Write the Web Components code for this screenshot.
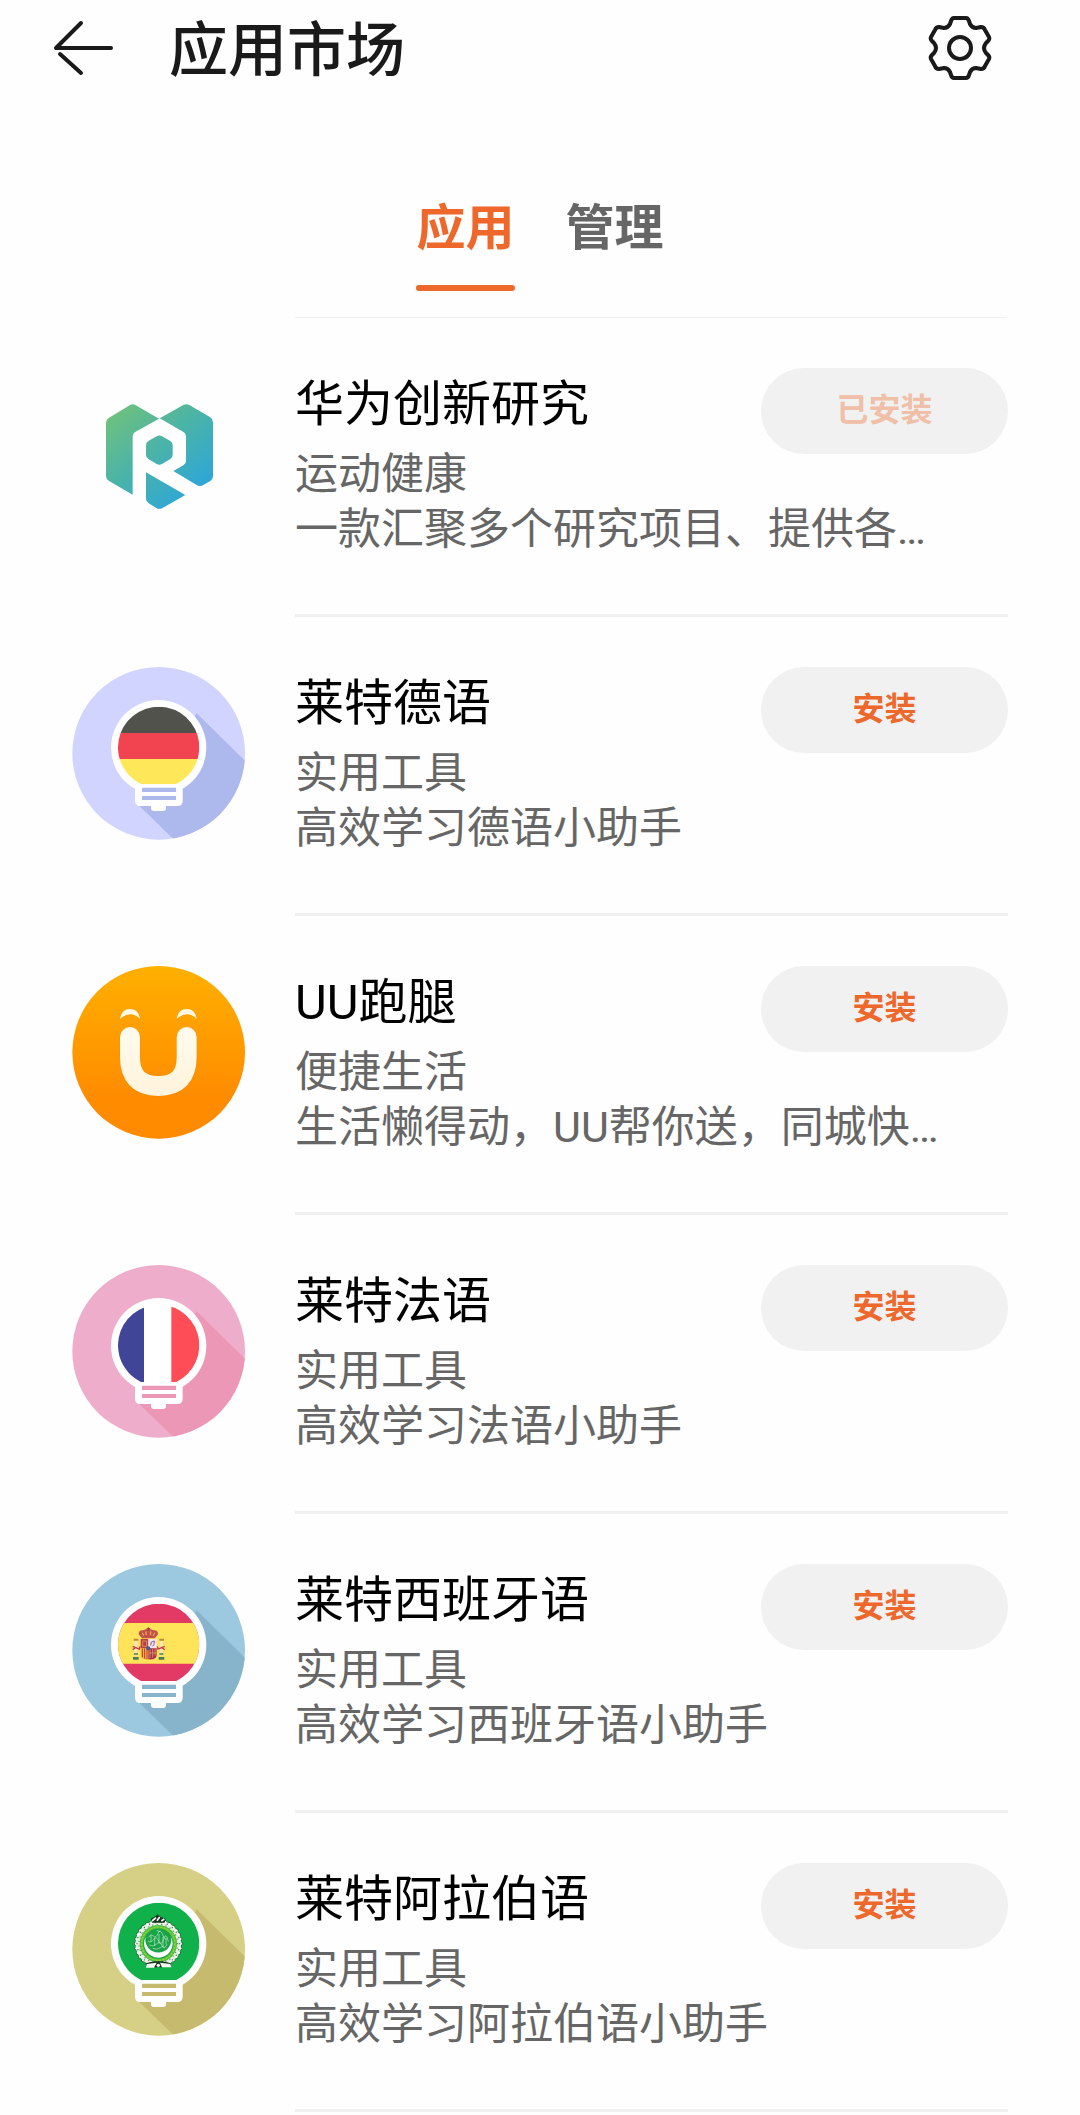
<!DOCTYPE html>
<html lang="zh-CN">
<head>
<meta charset="utf-8">
<meta name="viewport" content="width=device-width, initial-scale=1">
<title>应用市场</title>
<style>
  body {
    margin: 0;
    background: #fefefe;
    color: #000;
    font-family: Roboto, "Noto Sans CJK SC", sans-serif;
    --accent: #ee682b;
    --muted: #666;
    --line: #f1f1f1;
  }
</style>
</head>
<body>
<market-page>
  <market-header slot="header">应用市场</market-header>
  <market-tabs slot="tabs" labels="应用,管理"></market-tabs>
  <app-row installed>
    <app-icon slot="icon" kind="research"></app-icon>
    <span slot="name">华为创新研究</span>
    <span slot="category">运动健康</span>
    <span slot="summary">一款汇聚多个研究项目、提供各…</span>
  </app-row>
  <app-row>
    <app-icon slot="icon" kind="german"></app-icon>
    <span slot="name">莱特德语</span>
    <span slot="category">实用工具</span>
    <span slot="summary">高效学习德语小助手</span>
  </app-row>
  <app-row>
    <app-icon slot="icon" kind="errand"></app-icon>
    <span slot="name">UU跑腿</span>
    <span slot="category">便捷生活</span>
    <span slot="summary">生活懒得动，UU帮你送，同城快…</span>
  </app-row>
  <app-row>
    <app-icon slot="icon" kind="french"></app-icon>
    <span slot="name">莱特法语</span>
    <span slot="category">实用工具</span>
    <span slot="summary">高效学习法语小助手</span>
  </app-row>
  <app-row>
    <app-icon slot="icon" kind="spanish"></app-icon>
    <span slot="name">莱特西班牙语</span>
    <span slot="category">实用工具</span>
    <span slot="summary">高效学习西班牙语小助手</span>
  </app-row>
  <app-row>
    <app-icon slot="icon" kind="arabic"></app-icon>
    <span slot="name">莱特阿拉伯语</span>
    <span slot="category">实用工具</span>
    <span slot="summary">高效学习阿拉伯语小助手</span>
  </app-row>
</market-page>
<script>
  class MarketPage extends HTMLElement {
    constructor() {
      super();
      this.attachShadow({ mode: "open" }).innerHTML = `
        <style>
          :host { display: block; }
          main { display: flex; flex-direction: column; }
        </style>
        <slot name="header"></slot>
        <slot name="tabs"></slot>
        <main><slot></slot></main>`;
    }
  }
  customElements.define("market-page", MarketPage);

  class MarketHeader extends HTMLElement {
    constructor() {
      super();
      this.attachShadow({ mode: "open" }).innerHTML = `
        <style>
          :host { display: block; color: #1a1a1a; }
          header { display: flex; align-items: center; height: 96px; padding: 0 86px 0 52px; }
          button { display: flex; padding: 0; border: 0; background: none; color: inherit; cursor: pointer; }
          h1 { flex: 1; margin: 0 0 0 53px; padding-top: 6px; font-size: 59px; line-height: 84px; font-weight: 500; }
          svg { display: block; fill: none; stroke: currentColor; stroke-linecap: round; stroke-linejoin: round; }
        </style>
        <header>
          <button aria-label="返回">
            <svg width="64" height="64" viewBox="0 0 64 64" stroke-width="4"><path d="M29 7 4 32H59M8 38 29 57"/></svg>
          </button>
          <h1><slot></slot></h1>
          <button aria-label="设置">
            <svg width="68" height="68" viewBox="-34 -34 68 68" stroke-width="4">
              <path d="M-6-30H6Q8-30 9-27L10-24Q12-20 16-20L21-21Q24-21 25-18L29-11Q30-9 28-7L26-5Q22 0 26 5L28 7Q30 9 29 11L25 18Q24 21 21 21L16 20Q12 20 10 24L9 27Q8 30 6 30H-6Q-8 30-9 27L-10 24Q-12 20-16 20L-21 21Q-24 21-25 18L-29 11Q-30 9-28 7L-26 5Q-22 0-26-5L-28-7Q-30-9-29-11L-25-18Q-24-21-21-21L-16-20Q-12-20-10-24L-9-27Q-8-30-6-30Z"/>
              <circle r="11"/>
            </svg>
          </button>
        </header>`;
    }
  }
  customElements.define("market-header", MarketHeader);

  class MarketTabs extends HTMLElement {
    constructor() {
      super();
      const tabs = this.getAttribute("labels").split(",").map((label, i) =>
        `<button role="tab" aria-selected="${i === 0}">${label}</button>`).join("");
      this.attachShadow({ mode: "open" }).innerHTML = `
        <style>
          :host { display: block; }
          div { display: flex; justify-content: center; gap: 51px; padding: 104px 0 26px; }
          button {
            padding: 0; border: 0; background: none; cursor: pointer;
            font: 700 49px/58px Roboto, "Noto Sans CJK SC", sans-serif; color: var(--muted);
          }
          button::after { content: ""; display: block; height: 6px; margin-top: 27px; border-radius: 3px; }
          button[aria-selected="true"] { color: var(--accent); }
          button[aria-selected="true"]::after { background: var(--accent); }
          hr { height: 1px; margin: 0 74px 0 295px; border: 0; background: var(--line); }
        </style>
        <div role="tablist">${tabs}</div>
        <hr>`;
    }
  }
  customElements.define("market-tabs", MarketTabs);

  class AppRow extends HTMLElement {
    constructor() {
      super();
      const installed = this.hasAttribute("installed");
      this.attachShadow({ mode: "open" }).innerHTML = `
        <style>
          :host { display: block; }
          article { display: flex; gap: 50px; padding: 0 72px; }
          .icon { flex: none; padding-top: 50px; }
          .body {
            flex: 1; min-width: 0; display: grid;
            grid-template-columns: minmax(0, 1fr) 247px;
            padding: 50px 0 57px; border-bottom: 3px solid var(--line);
          }
          h2 { margin: 2px 0 7px; font-size: 49px; line-height: 70px; font-weight: 400; white-space: nowrap; }
          p { margin: 0; font-size: 43px; line-height: 55px; color: var(--muted); white-space: nowrap; }
          .summary { grid-column: 1 / -1; overflow: hidden; text-overflow: ellipsis; }
          button {
            grid-column: 2; grid-row: 1 / 3; align-self: start;
            height: 86px; padding: 0 0 2px; border: 0; border-radius: 43px;
            background: var(--line); color: var(--accent); cursor: pointer;
            font: 700 32px/46px Roboto, "Noto Sans CJK SC", sans-serif;
          }
          button:disabled { color: #f0bfa8; cursor: default; }
        </style>
        <article>
          <div class="icon"><slot name="icon"></slot></div>
          <div class="body">
            <h2><slot name="name"></slot></h2>
            <button ${installed ? "disabled" : ""}>${installed ? "已安装" : "安装"}</button>
            <p><slot name="category"></slot></p>
            <p class="summary"><slot name="summary"></slot></p>
          </div>
        </article>`;
    }
  }

  /* A light bulb with a long shadow; the glass holds a flag. */
  const bulb = (base, shade, flag) => `
    <clipPath id="disc"><circle cx="296" cy="310" r="259"/></clipPath>
    <clipPath id="glass"><path d="M174 293A122 122 0 1 1 349 402H243A122 122 0 0 1 174 293Z"/></clipPath>
    <g clip-path="url(#disc)">
      <path fill="${base}" d="M30 45H560V575H30Z"/>
      <path fill="${shade}" d="M410 190 600 376V620H395L235 465Z"/>
    </g>
    <circle cx="296" cy="293" r="143" fill="#fff"/>
    <path fill="#fff" d="M225 395H368V452Q368 468 352 468H318V474Q318 483 309 483H282Q273 483 273 474V468H241Q225 468 225 452Z"/>
    <g clip-path="url(#glass)">${flag}</g>
    <path fill="${shade}" d="M246 413H348V426H246ZM246 438H348V450H246Z"/>`;

  const ring = (r, n, size, fill) => Array.from({ length: n }, (_, i) => {
    const a = (i / n) * 2 * Math.PI;
    return `<circle cx="${(295 + r * Math.cos(a)).toFixed(1)}" cy="${(293 + r * Math.sin(a)).toFixed(1)}" r="${size}" fill="${fill}"/>`;
  }).join("");

  const ART = {
    research: `
      <linearGradient id="g" gradientUnits="userSpaceOnUse" x1="160" y1="140" x2="400" y2="430">
        <stop offset="0" stop-color="#70c17b"/><stop offset=".5" stop-color="#49b3aa"/><stop offset="1" stop-color="#2ba5dc"/>
      </linearGradient>
      <g fill="url(#g)">
        <path d="M138 188Q138 179 146 174L209 136Q217 130 226 135L297 176 227 215Q218 220 218 230V404L146 362Q138 357 138 348Z"/>
        <path d="M299 175 370 135Q379 130 388 135L451 172Q459 177 459 187V348Q459 358 451 363L430 375Q420 381 410 375L340 333 370 316Q378 311 378 302V230Q378 220 369 215Z"/>
        <path d="M290 229Q298 224 306 229L331 243Q338 247 338 256V284Q338 293 331 297L306 312Q298 317 290 312L265 297Q258 293 258 284V256Q258 247 265 243Z"/>
        <path d="M258 337 376 405 309 443Q298 450 288 443L266 430Q258 425 258 416Z"/>
      </g>`,
    errand: `
      <linearGradient id="g" x1="0" y1="0" x2="0" y2="1">
        <stop offset="0" stop-color="#ffb000"/><stop offset=".75" stop-color="#ff8c00"/><stop offset="1" stop-color="#ff8a00"/>
      </linearGradient>
      <linearGradient id="u" gradientUnits="userSpaceOnUse" x1="0" y1="234" x2="0" y2="441">
        <stop offset="0" stop-color="#fffbee"/><stop offset="1" stop-color="#fff4dc"/>
      </linearGradient>
      <circle cx="296" cy="310" r="259" fill="url(#g)"/>
      <path d="M210 266V324Q210 411 295 411Q380 411 380 324V266" fill="none" stroke="#f08000" stroke-opacity=".35" stroke-width="64" stroke-linecap="round"/>
      <path d="M210 264V324Q210 411 295 411Q380 411 380 324V264" fill="none" stroke="url(#u)" stroke-width="60" stroke-linecap="round"/>
      <path fill="#fff8e5" d="M180 210Q184 180 210 180T240 210Q226 195 210 196T180 210Z"/>
      <path fill="#fff8e5" d="M350 210Q354 180 380 180T410 210Q396 195 380 196T350 210Z"/>`,
    german: bulb("#d0d4ff", "#adb9ed", `
      <path fill="#52524c" d="M170 165H420V249H170Z"/>
      <path fill="#f14450" d="M170 249H420V327H170Z"/>
      <path fill="#ffe75a" d="M170 327H420V405H170Z"/>`),
    french: bulb("#eeadca", "#eb97b5", `
      <path fill="#414598" d="M170 165H252V405H170Z"/>
      <path fill="#fff" d="M252 165H334V405H252Z"/>
      <path fill="#ff4d57" d="M334 165H420V405H334Z"/>`),
    spanish: bulb("#9cc9df", "#87b4cb", `
      <path fill="#e23a65" d="M170 165H420V405H170Z"/>
      <path fill="#ffe459" d="M170 228H420V350H170Z"/>
      <path fill="#c4504a" d="M236 262Q236 248 250 250 264 240 280 250 294 248 294 262L284 274H246Z"/>
      <path stroke="#f0c552" stroke-width="3" fill="none" d="M247 257 251 266M258 253V264M272 253V264M284 257 280 266"/>
      <path stroke="#a03a42" stroke-width="3" d="M265 241V252M260 245H270"/>
      <path fill="#b83c4c" d="M242 276H265V304H242Z"/>
      <path fill="#f5e3ee" d="M265 276H290V304H265Z"/>
      <path fill="#f0b83c" d="M242 304H265V337Q242 339 242 324Z"/>
      <path fill="#a92f58" d="M265 304H290V324Q290 339 265 337Z"/>
      <path stroke="#c63240" stroke-width="3" d="M247 304V331M254 304V335M261 304V337"/>
      <path stroke="#efb94a" stroke-width="2" fill="none" d="M270 306V334M278 306V332M285 306V326M267 318H289M248 282H260V298H248Z"/>
      <path stroke="#8a58a8" stroke-width="3" fill="none" d="M272 296 274 285 283 282 282 292 278 298"/>
      <circle cx="265" cy="304" r="6" fill="#3d5b9c"/>
      <path fill="#efe6df" d="M224 282H231V326H224ZM301 282H308V326H301Z"/>
      <path fill="#477c5e" d="M219 330H236V338H219ZM296 330H313V338H296ZM222 319H234V323H222ZM298 319H310V323H298Z"/>
      <path fill="#bf8a3c" d="M221 275H235V281H221ZM298 275H312V281H298Z"/>
      <path stroke="#c8324c" stroke-width="4" fill="none" d="M218 298 238 306 240 298M218 308 226 302M314 298 294 306 292 298M314 308 306 302"/>`),
    arabic: bulb("#d6cf86", "#c6ba6e", `
      <path fill="#10b04b" d="M170 165H420V405H170Z"/>
      ${ring(67, 30, 6, "#1d4d2d")}
      <circle cx="295" cy="293" r="62" fill="none" stroke="#e4efe2" stroke-width="13"/>
      ${ring(67, 30, 4, "#f6faf4")}
      ${ring(64, 22, 2, "#3f5a45")}
      ${ring(58, 27, 2, "#4a8a55")}
      <circle cx="295" cy="293" r="50" fill="#18a548" stroke="#62c234" stroke-width="9"/>
      <circle cx="295" cy="293" r="50" fill="none" stroke="#9be04a" stroke-width="3" stroke-dasharray="6 4"/>
      <path fill="#fff" d="M257 272A43 43 0 1 0 333 272A39 39 0 1 1 257 272Z"/>
      <path stroke="#c2e6cb" stroke-width="2" fill="none" d="M266 274Q272 262 280 270T294 262T308 266T322 276M264 285Q274 292 281 280T296 285T311 279T325 287M268 297Q281 304 290 294T306 299T321 294M278 307Q291 313 301 305T314 306M273 267V287M284 275V300M297 264V292M309 273V300M318 278V294M290 254 301 257"/>
      <path fill="#18331f" d="M272 218 286 211 293 205 301 212 317 218 314 230H276Z"/>
      <path stroke="#f5faf5" stroke-width="5" fill="none" d="M276 225 288 215M291 224 299 213M304 225 313 219"/>
      <path fill="#18331f" d="M257 352 283 346H307L333 352 328 363H261Z"/>
      <path fill="#f5faf5" d="M260 354 290 350 282 365H258ZM300 350 331 354 334 364H306Z"/>
      <circle cx="295" cy="358" r="5" fill="#f5faf5"/>`)
  };

  class AppIcon extends HTMLElement {
    constructor() {
      super();
      const kind = this.getAttribute("kind");
      const top = kind === "research" ? 24 : 51;
      this.attachShadow({ mode: "open" }).innerHTML = `
        <style>
          :host { display: block; width: 173px; }
          svg { display: block; width: 100%; height: auto; }
        </style>
        <svg viewBox="36 ${top} 519 519" aria-hidden="true">${ART[kind]}</svg>`;
    }
  }
  customElements.define("app-icon", AppIcon);
  customElements.define("app-row", AppRow);
</script>
</body>
</html>
